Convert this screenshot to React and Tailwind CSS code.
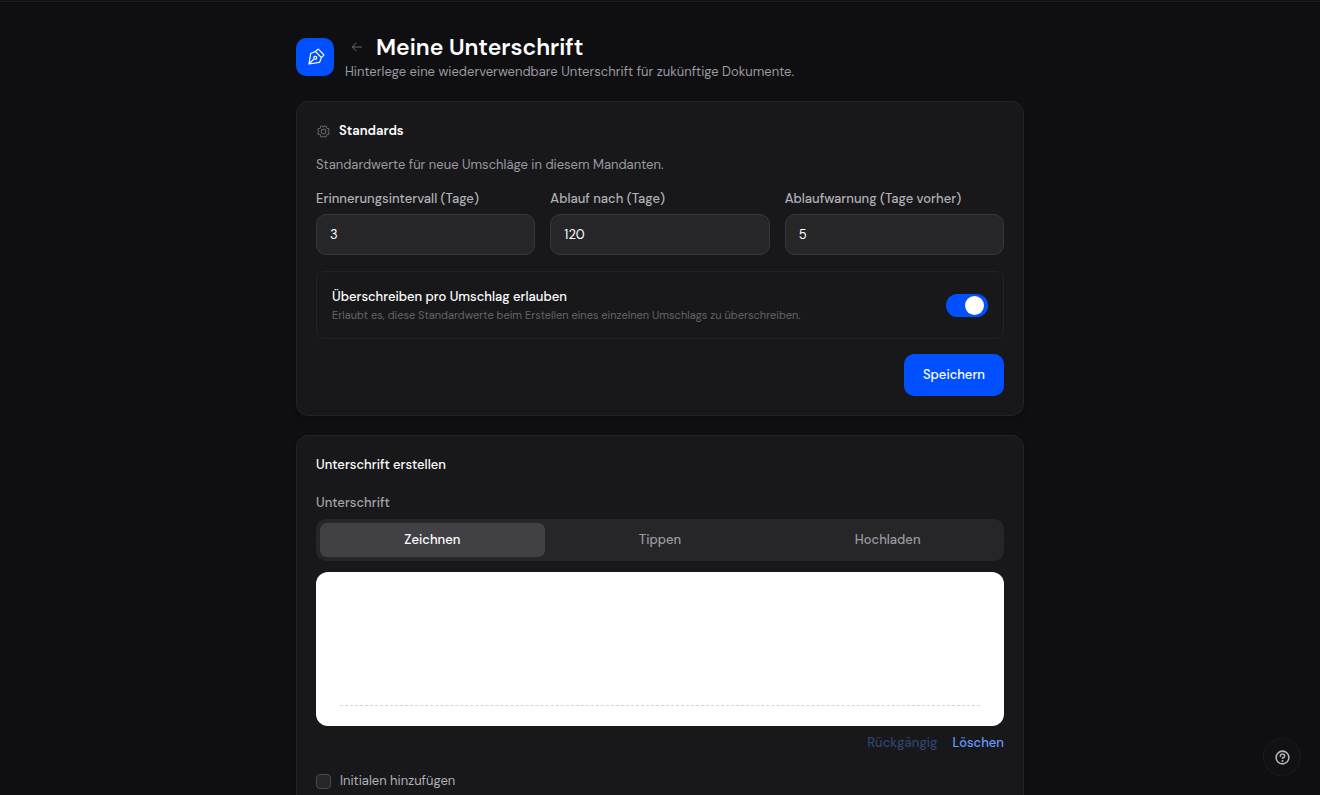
import { useState } from "react";
import {
  PiArrowLeft,
  PiGear,
  PiPenNib,
  PiQuestionBold,
} from "react-icons/pi";

const fields = [
  { id: "reminder", label: "Erinnerungsintervall (Tage)", value: "3" },
  { id: "expiry", label: "Ablauf nach (Tage)", value: "120" },
  { id: "warning", label: "Ablaufwarnung (Tage vorher)", value: "5" },
];

const tabs = ["Zeichnen", "Tippen", "Hochladen"];

function Card({ children }) {
  return (
    <section className="rounded-xl border border-[#232326] bg-[#18181a] p-[19px] shadow-md">
      {children}
    </section>
  );
}

function PageHeader() {
  return (
    <header className="flex items-center gap-[11px]">
      <div className="flex size-[38px] shrink-0 items-center justify-center rounded-[10px] bg-[#0050ff] text-white">
        <PiPenNib className="size-[19px]" aria-hidden="true" />
      </div>
      <div>
        <div className="flex items-center gap-3 pl-[5px]">
          <a href="#zurueck" aria-label="Zurück" className="text-[#65656c]">
            <PiArrowLeft className="size-[14px]" />
          </a>
          <h1 className="text-[23px] leading-[30px] font-semibold text-white">
            Meine Unterschrift
          </h1>
        </div>
        <p className="text-[13px] leading-5 text-[#9a9aa2]">
          Hinterlege eine wiederverwendbare Unterschrift für zukünftige Dokumente.
        </p>
      </div>
    </header>
  );
}

function Defaults() {
  const [override, setOverride] = useState(true);
  return (
    <Card>
      <h2 className="flex items-center gap-2 text-[13px] leading-5 font-semibold text-white">
        <PiGear className="size-[15px] text-[#68686f]" aria-hidden="true" />
        Standards
      </h2>
      <p className="mt-[14px] text-[13px] leading-5 text-[#9a9aa2]">
        Standardwerte für neue Umschläge in diesem Mandanten.
      </p>
      <div className="mt-[14px] grid grid-cols-3 gap-[15px]">
        {fields.map((f) => (
          <div key={f.id} className="flex flex-col gap-[5px]">
            <label htmlFor={f.id} className="text-[13px] leading-5 font-medium text-[#b0b0b7]">
              {f.label}
            </label>
            <input
              id={f.id}
              type="text"
              inputMode="numeric"
              defaultValue={f.value}
              className="h-[41px] w-full rounded-[10px] border border-[#38383c] bg-[#262628] px-[13px] text-[13px] text-white outline-none focus:border-[#0050ff]"
            />
          </div>
        ))}
      </div>
      <div className="mt-4 flex items-center justify-between rounded-lg border border-[#232326] px-[15px] py-[15px]">
        <div>
          <label htmlFor="override" className="block text-[13px] leading-5 font-medium text-white">
            Überschreiben pro Umschlag erlauben
          </label>
          <p className="text-[11px] leading-4 text-[#63636a]">
            Erlaubt es, diese Standardwerte beim Erstellen eines einzelnen Umschlags zu überschreiben.
          </p>
        </div>
        <button
          id="override"
          type="button"
          role="switch"
          aria-checked={override}
          onClick={() => setOverride(!override)}
          className={
            override
              ? "flex h-[23px] w-[42px] items-center justify-end rounded-full bg-[#0050ff] px-1"
              : "flex h-[23px] w-[42px] items-center justify-start rounded-full bg-[#3f3f46] px-1"
          }
        >
          <span className="size-[19px] rounded-full bg-white" />
        </button>
      </div>
      <div className="mt-[15px] flex justify-end">
        <button
          type="button"
          className="h-[42px] rounded-[10px] bg-[#0050ff] px-[19px] text-[13px] font-medium text-white"
        >
          Speichern
        </button>
      </div>
    </Card>
  );
}

function CreateSignature() {
  const [active, setActive] = useState("Zeichnen");
  return (
    <Card>
      <h2 className="text-[13px] leading-5 font-medium text-white">Unterschrift erstellen</h2>
      <p className="mt-[18px] text-[13px] leading-5 font-medium text-[#a3a3ab]">Unterschrift</p>
      <div role="tablist" className="mt-[6px] grid grid-cols-3 gap-[3px] rounded-[10px] bg-[#262628] p-1">
        {tabs.map((t) => (
          <button
            key={t}
            type="button"
            role="tab"
            aria-selected={active === t}
            onClick={() => setActive(t)}
            className={
              active === t
                ? "h-[34px] rounded-[7px] bg-[#404045] text-[13px] font-medium text-white"
                : "h-[34px] rounded-[7px] text-[13px] font-medium text-[#9a9aa2]"
            }
          >
            {t}
          </button>
        ))}
      </div>
      <div className="mt-[11px] flex h-[154px] flex-col justify-end rounded-xl bg-white px-6 pb-5">
        <div className="border-t border-dashed border-[#d4d4d8]" />
      </div>
      <div className="mt-[7px] flex justify-end gap-[15px] text-[13px] leading-5 font-medium">
        <button type="button" disabled className="text-[#2f4370]">
          Rückgängig
        </button>
        <button type="button" className="text-[#6699ff]">
          Löschen
        </button>
      </div>
      <div className="mt-[18px] flex items-center gap-[9px]">
        <input
          id="initials"
          type="checkbox"
          className="size-[15px] appearance-none rounded-[4px] border border-[#48484d] bg-[#262628] checked:bg-[#0050ff]"
        />
        <label htmlFor="initials" className="text-[13px] leading-5 text-[#b0b0b7]">
          Initialen hinzufügen
        </label>
      </div>
    </Card>
  );
}

export default function App() {
  return (
    <div className="h-screen overflow-hidden bg-[#0f0f11] pt-px font-['DM_Sans',Inter,sans-serif]">
      <main className="border-t border-[#1d1d20] px-6 pt-[30px]">
        <div className="mx-auto flex max-w-[728px] flex-col gap-[19px]">
          <PageHeader />
          <Defaults />
          <CreateSignature />
        </div>
      </main>
      <button
        type="button"
        aria-label="Hilfe"
        className="fixed right-[19px] bottom-[19px] flex size-[38px] items-center justify-center rounded-full border border-[#1d1d20] bg-[#111113] text-[#b4b4ba]"
      >
        <PiQuestionBold className="size-[17px]" />
      </button>
    </div>
  );
}
